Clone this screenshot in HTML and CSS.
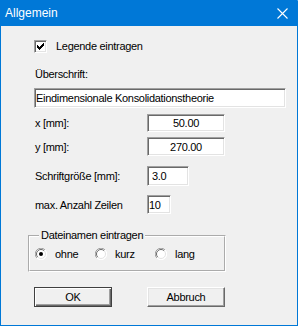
FILE: index.html
```html
<!DOCTYPE html>
<html>
<head>
    <title>Allgemein</title>
    <link rel="stylesheet" href="styles.css">
</head>
<body>
    <div class="window">
        <div class="titlebar">
            <span class="title">Allgemein</span>
            <svg class="close" width="11" height="11" viewBox="0 0 11 11">
                <path d="M0.5 0.5 L10.5 10.5 M10.5 0.5 L0.5 10.5" stroke="#fff" stroke-width="1.1" fill="none"/>
            </svg>
        </div>
        <div class="content">
            <label class="check-row">
                <span class="checkbox">
                    <svg width="9" height="9" viewBox="0 0 9 9" shape-rendering="crispEdges">
                        <rect x="1" y="3" width="1" height="3" fill="#000"/>
                        <rect x="2" y="4" width="1" height="3" fill="#000"/>
                        <rect x="3" y="5" width="1" height="3" fill="#000"/>
                        <rect x="4" y="4" width="1" height="3" fill="#000"/>
                        <rect x="5" y="3" width="1" height="3" fill="#000"/>
                        <rect x="6" y="2" width="1" height="3" fill="#000"/>
                        <rect x="7" y="1" width="1" height="3" fill="#000"/>
                    </svg>
                </span>
                Legende eintragen
            </label>

            <div class="caption">Überschrift:</div>
            <input class="field wide" type="text" value="Eindimensionale Konsolidationstheorie" readonly>

            <div class="row row-x">
                <span class="label">x [mm]:</span>
                <input class="field coord" type="text" value="50.00" readonly>
            </div>
            <div class="row row-y">
                <span class="label">y [mm]:</span>
                <input class="field coord" type="text" value="270.00" readonly>
            </div>
            <div class="row row-size">
                <span class="label">Schriftgröße [mm]:</span>
                <input class="field size" type="text" value="3.0" readonly>
            </div>
            <div class="row row-lines">
                <span class="label">max. Anzahl Zeilen</span>
                <input class="field lines" type="text" value="10" readonly>
            </div>

            <fieldset class="group">
                <legend>Dateinamen eintragen</legend>
                <div class="radios">
                    <label class="radio-opt">
                        <svg class="radio" width="12" height="12" viewBox="0 0 12 12">
                            <circle cx="6" cy="6" r="5.5" fill="#fff"/>
                            <path d="M1.9 10.1 A5.5 5.5 0 0 1 10.1 1.9" stroke="#a0a0a0" fill="none"/>
                            <path d="M10.1 1.9 A5.5 5.5 0 0 1 1.9 10.1" stroke="#fff" fill="none"/>
                            <path d="M2.8 9.2 A4.5 4.5 0 0 1 9.2 2.8" stroke="#696969" fill="none"/>
                            <path d="M9.2 2.8 A4.5 4.5 0 0 1 2.8 9.2" stroke="#e3e3e3" fill="none"/>
                            <circle cx="6" cy="6" r="2" fill="#000"/>
                        </svg>
                        ohne
                    </label>
                    <label class="radio-opt">
                        <svg class="radio" width="12" height="12" viewBox="0 0 12 12">
                            <circle cx="6" cy="6" r="5.5" fill="#fff"/>
                            <path d="M1.9 10.1 A5.5 5.5 0 0 1 10.1 1.9" stroke="#a0a0a0" fill="none"/>
                            <path d="M10.1 1.9 A5.5 5.5 0 0 1 1.9 10.1" stroke="#fff" fill="none"/>
                            <path d="M2.8 9.2 A4.5 4.5 0 0 1 9.2 2.8" stroke="#696969" fill="none"/>
                            <path d="M9.2 2.8 A4.5 4.5 0 0 1 2.8 9.2" stroke="#e3e3e3" fill="none"/>
                        </svg>
                        kurz
                    </label>
                    <label class="radio-opt">
                        <svg class="radio" width="12" height="12" viewBox="0 0 12 12">
                            <circle cx="6" cy="6" r="5.5" fill="#fff"/>
                            <path d="M1.9 10.1 A5.5 5.5 0 0 1 10.1 1.9" stroke="#a0a0a0" fill="none"/>
                            <path d="M10.1 1.9 A5.5 5.5 0 0 1 1.9 10.1" stroke="#fff" fill="none"/>
                            <path d="M2.8 9.2 A4.5 4.5 0 0 1 9.2 2.8" stroke="#696969" fill="none"/>
                            <path d="M9.2 2.8 A4.5 4.5 0 0 1 2.8 9.2" stroke="#e3e3e3" fill="none"/>
                        </svg>
                        lang
                    </label>
                </div>
            </fieldset>

            <div class="buttons">
                <button class="btn default">OK</button>
                <button class="btn">Abbruch</button>
            </div>
        </div>
    </div>
</body>
</html>
```

FILE: styles.css
```css
body {
    margin: 0;
    background: #fff;
    font-family: "Liberation Sans", Arial, sans-serif;
    font-size: 11px;
    color: #000;
}
.window {
    width: 298px;
    height: 326px;
    display: flex;
    flex-direction: column;
}
.titlebar {
    height: 26px;
    flex: none;
    display: flex;
    justify-content: space-between;
    padding-left: 5px;
    background: #0078d7; /* Windows 10 accent */
    color: #fff;
    font-size: 12px;
    line-height: 26px;
    border-top-right-radius: 1px;
}
.close {
    margin: 8px 10px 0 0;
}
.content {
    flex: 1;
    box-sizing: border-box;
    padding: 14px 0 0 27px;
    background: #f0f0f0;
    border: 1px solid #0078d7;
    border-top: none;
    letter-spacing: -0.3px; /* old dialog font runs narrower than Arial */
}
.check-row {
    display: flex;
    align-items: center;
    height: 13px;
    margin-left: 6px;
    line-height: 13px;
}
.checkbox {
    width: 13px;
    height: 13px;
    box-sizing: border-box;
    margin-right: 9px;
    padding: 1px;
    background: #fff;
    border: 1px solid;
    border-color: #a0a0a0 #fff #fff #a0a0a0;
    box-shadow: inset 1px 1px #696969, inset -1px -1px #e3e3e3;
}
.checkbox svg {
    display: block;
}
.caption {
    margin: 15px 0 0 7px;
    line-height: 13px;
}
.field {
    display: block;
    box-sizing: border-box;
    margin: 0;
    padding: 0 0 0 1px;
    background: #fff;
    border: 1px solid;
    border-color: #a0a0a0 #fff #fff #a0a0a0;
    box-shadow: inset 1px 1px #696969, inset -1px -1px #e3e3e3;
    font-family: inherit;
    font-size: 11px;
    letter-spacing: -0.3px;
    color: #000;
    outline: none;
}
.wide {
    width: 252px;
    height: 20px;
    margin: 7px 0 0 6px;
}
.row {
    display: flex;
    align-items: center;
    margin-left: 6px;
}
.label {
    width: 113px;
    padding-left: 1px;
    box-sizing: border-box;
}
.row-x {
    margin-top: 6px;
}
.row-y {
    margin-top: 5px;
}
.row-size {
    margin-top: 10px;
}
.row-lines {
    margin-top: 9px;
}
.coord {
    width: 78px;
    height: 19px;
    padding: 0;
    text-align: center;
}
.row-x .coord {
    height: 18px;
}
.size {
    width: 42px;
    height: 20px;
    padding-left: 4px;
}
.lines {
    width: 24px;
    height: 19px;
}
.group {
    width: 198px;
    box-sizing: border-box;
    margin: 15px 0 0 0;
    padding: 6px 0 10px 5px;
    border: 2px groove #fff;
}
.group legend {
    margin-left: 4px;
    padding: 0 2px;
    line-height: 13px;
}
.radios {
    display: flex;
    height: 12px;
}
.radio-opt {
    display: flex;
    align-items: center;
    width: 60px;
    line-height: 12px;
}
.radio {
    display: block;
    margin-right: 8px;
}
.buttons {
    display: flex;
    gap: 35px;
    margin: 15px 0 0 6px;
}
.btn {
    width: 78px;
    height: 20px;
    padding: 0;
    background: #f0f0f0;
    border: 1px solid;
    border-color: #fff #696969 #696969 #fff;
    box-shadow: inset -1px -1px #a0a0a0, inset 1px 1px #e3e3e3;
    font-family: inherit;
    font-size: 11px;
    letter-spacing: -0.3px;
    color: #000;
}
.btn.default {
    border-color: #404040;
    box-shadow: inset 1px 1px #fff, inset -1px -1px #696969, inset -2px -2px #a0a0a0;
}
```
